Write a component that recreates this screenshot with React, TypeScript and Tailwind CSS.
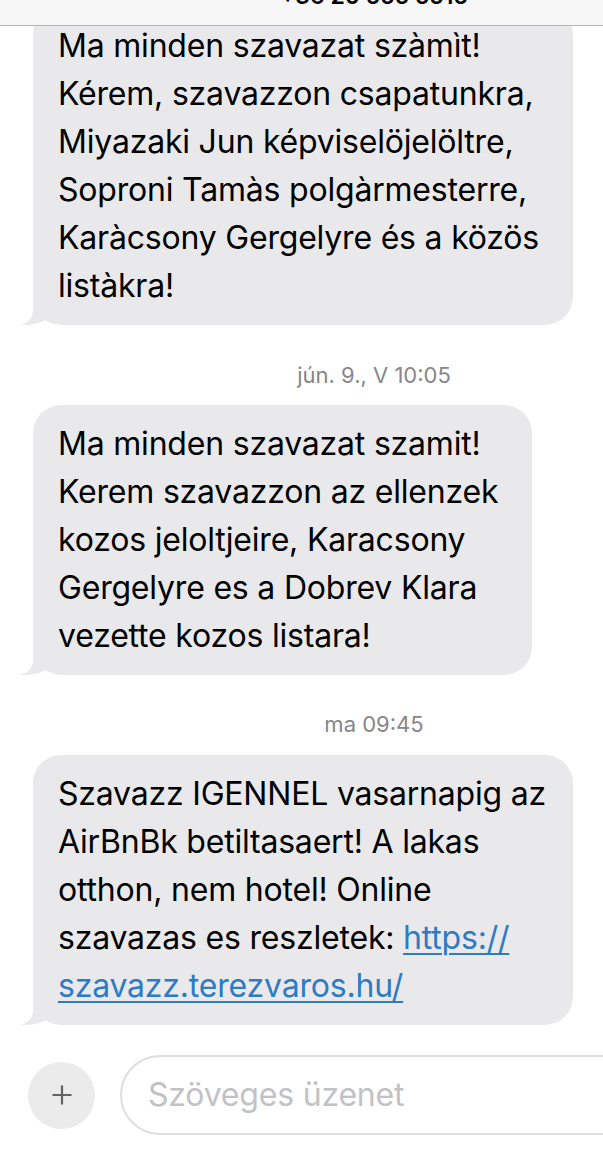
import { Plus } from "lucide-react";

const MESSAGES = [
  {
    lines: [
      "Ma minden szavazat szàmìt!",
      "Kérem, szavazzon csapatunkra,",
      "Miyazaki Jun képviselöjelöltre,",
      "Soproni Tamàs polgàrmesterre,",
      "Karàcsony Gergelyre és a közös",
      "listàkra!",
    ],
    width: "w-[540px]",
    stamp: "jún. 9., V 10:05",
  },
  {
    lines: [
      "Ma minden szavazat szamit!",
      "Kerem szavazzon az ellenzek",
      "kozos jeloltjeire, Karacsony",
      "Gergelyre es a Dobrev Klara",
      "vezette kozos listara!",
    ],
    width: "w-[499px]",
    stamp: "ma 09:45",
  },
];

function Tail() {
  return (
    <svg className="absolute bottom-0 left-[-13px] h-[32px] w-[30px]" viewBox="0 0 30 32" fill="#e9e9eb">
      <path d="M13 0 L13 17 C13 25 8 30 0 32 C9 32.5 19 31 26 27 L30 0 Z" />
    </svg>
  );
}

function Bubble({ width, children }: { width: string; children: React.ReactNode }) {
  return (
    <div className={`relative ${width} rounded-[28px] bg-[#e9e9eb] py-[15px] pl-[25px] text-[32px] leading-[48px] tracking-[-0.2px] whitespace-nowrap text-black`}>
      {children}
      <Tail />
    </div>
  );
}

function Stamp({ text, first }: { text: string; first?: boolean }) {
  return (
    <div className={`${first ? "pt-[38px] pb-[18px]" : "pt-[37px] pb-[19px]"} pr-[33px] text-center text-[22px] leading-[24px] text-[#86868b]`}>
      {text}
    </div>
  );
}

export default function App() {
  return (
    <div className="h-[1152px] w-full overflow-hidden bg-white font-['Inter',sans-serif]">
      <div className="relative w-[748px]">
        {/* nav bar, scrolled content sits under it */}
        <div className="absolute inset-x-0 top-0 z-10 h-[26px] overflow-hidden border-b border-[#b4b4b4] bg-[#f7f7f7]">
          <p className="-mt-[17px] text-center text-[23px] leading-[26px] font-semibold text-black">+36 20 555 5515</p>
        </div>

        <div className="flex flex-col pt-[7px] pl-[33px]">
          {MESSAGES.map((m, i) => (
            <div key={i}>
              <Bubble width={m.width}>
                {m.lines.map((l) => (
                  <div key={l}>{l}</div>
                ))}
              </Bubble>
              <Stamp text={m.stamp} first={i === 0} />
            </div>
          ))}

          <Bubble width="w-[540px]">
            <div>Szavazz IGENNEL vasarnapig az</div>
            <div>AirBnBk betiltasaert! A lakas</div>
            <div>otthon, nem hotel! Online</div>
            <div>
              szavazas es reszletek:{" "}
              <a className="text-[#2d7bc4] underline decoration-[2px] underline-offset-[4px]" href="#">
                https://
              </a>
            </div>
            <div>
              <a className="text-[#2d7bc4] underline decoration-[2px] underline-offset-[4px]" href="#">
                szavazz.terezvaros.hu/
              </a>
            </div>
          </Bubble>
        </div>

        <div className="flex items-center gap-[25px] pt-[30px] pl-[28px] pr-[20px]">
          <div className="flex h-[67px] w-[67px] shrink-0 items-center justify-center rounded-full bg-[#ebebeb]">
            <Plus className="h-[30px] w-[30px] text-[#636366]" strokeWidth={1.75} />
          </div>
          <div className="flex h-[80px] flex-1 items-center rounded-full border-2 border-[#dedede] pl-[26px] text-[32px] tracking-[-0.2px] text-[#c2c2c6]">
            Szöveges üzenet
          </div>
        </div>
      </div>
    </div>
  );
}
